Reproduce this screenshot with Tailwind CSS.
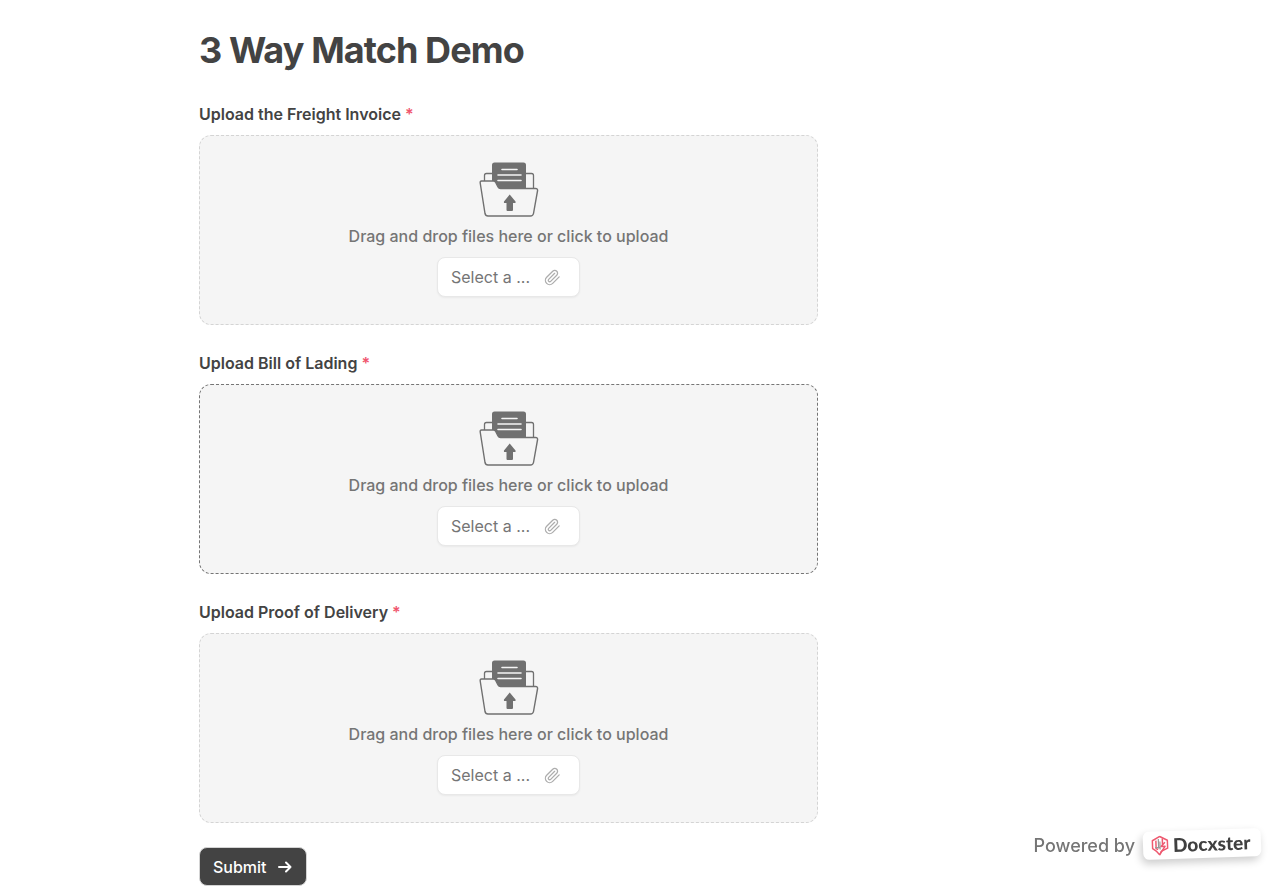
<!DOCTYPE html>
<html lang="en">

<head>
  <meta charset="utf-8">
  <meta name="viewport" content="width=device-width,initial-scale=1">
  <title>3 Way Match Demo</title>
  <script src="https://cdn.jsdelivr.net/npm/@tailwindcss/browser@4"></script>
</head>

<body class="min-h-screen bg-white font-['Inter',sans-serif] text-[#434343]">
  <!-- shared icons -->
  <svg class="hidden" aria-hidden="true">
    <symbol id="folder" viewBox="0 0 60 56">
      <path d="M5.5 19V13.5Q5.5 11.5 7.5 11.5H13M47 11.5H52.5Q54.5 11.5 54.5 13.5V26.5" fill="none" stroke="#707070" stroke-width="1.3" />
      <path d="M13 20V3Q13 .5 15.500 .5H44.500Q47 .5 47 3V27H20L16 20Z" fill="#707070" />
      <path d="M23 7.500H38M19 13H42M19 18.500H42" stroke="#f5f5f5" stroke-width="1.6" stroke-linecap="round" />
      <path d="M2.500 19H14.500Q16 19 16.700 20.500L19 25Q19.800 26.500 21.500 26.500H56.500Q59 26.500 58.500 29L54.500 51.500Q54 54 51.500 54H9Q6.500 54 6 51.500L1.200 21Q1 19 2.500 19Z" fill="#f5f5f5" stroke="#707070" stroke-width="1.4" />
      <path d="M30.700 32.500L36.500 39.500Q37 41 35.500 41H34V48Q34 49 33 49H28.500Q27.500 49 27.500 48V41H26Q24.500 41 25 39.500Z" fill="#707070" />
    </symbol>
    <symbol id="clip" viewBox="0 0 24 24">
      <path d="m21.440 11.050-9.190 9.190a6 6 0 0 1-8.490-8.490l8.570-8.570A4 4 0 1 1 18 8.840l-8.590 8.570a2 2 0 0 1-2.830-2.830l8.490-8.480" fill="none" stroke="#adadad" stroke-width="1.8" stroke-linecap="round" stroke-linejoin="round" />
    </symbol>
  </svg>

  <main class="px-6 pt-7 pb-2 md:pl-[199px]">
    <h1 class="text-4xl leading-[44px] font-bold tracking-tight">3 Way Match Demo</h1>
    <form class="mt-8 flex max-w-[619px] flex-col">
      <div class="mb-7">
        <label for="invoice" class="block text-base leading-5 font-semibold">Upload the Freight Invoice <span class="text-[#f0566e]">*</span></label>
        <div class="relative mt-[11px] flex h-[190px] flex-col items-center rounded-xl border border-dashed border-[#d4d4d4] bg-[#f5f5f5] pt-[26px]">
          <svg class="h-14 w-15"><use href="#folder" /></svg>
          <p class="mt-2 text-base leading-5 font-medium text-[#757575]">Drag and drop files here or click to upload</p>
          <input type="file" id="invoice" class="sr-only">
          <button type="button" class="mt-[11px] flex h-10 w-[143px] items-center gap-3.5 rounded-lg border border-[#e8e8e8] bg-white px-[13px] text-base text-[#757575] shadow-xs">Select a ...<svg class="size-[17px]"><use href="#clip" /></svg></button>
        </div>
      </div>

      <div class="mb-7">
        <label for="lading" class="block text-base leading-5 font-semibold">Upload Bill of Lading <span class="text-[#f0566e]">*</span></label>
        <div class="relative mt-[11px] flex h-[190px] flex-col items-center rounded-xl border border-dashed border-[#757575] bg-[#f5f5f5] pt-[26px]">
          <svg class="h-14 w-15"><use href="#folder" /></svg>
          <p class="mt-2 text-base leading-5 font-medium text-[#757575]">Drag and drop files here or click to upload</p>
          <input type="file" id="lading" class="sr-only">
          <button type="button" class="mt-[11px] flex h-10 w-[143px] items-center gap-3.5 rounded-lg border border-[#e8e8e8] bg-white px-[13px] text-base text-[#757575] shadow-xs">Select a ...<svg class="size-[17px]"><use href="#clip" /></svg></button>
        </div>
      </div>

      <div class="mb-6">
        <label for="delivery" class="block text-base leading-5 font-semibold">Upload Proof of Delivery <span class="text-[#f0566e]">*</span></label>
        <div class="relative mt-[11px] flex h-[190px] flex-col items-center rounded-xl border border-dashed border-[#d4d4d4] bg-[#f5f5f5] pt-[26px]">
          <svg class="h-14 w-15"><use href="#folder" /></svg>
          <p class="mt-2 text-base leading-5 font-medium text-[#757575]">Drag and drop files here or click to upload</p>
          <input type="file" id="delivery" class="sr-only">
          <button type="button" class="mt-[11px] flex h-10 w-[143px] items-center gap-3.5 rounded-lg border border-[#e8e8e8] bg-white px-[13px] text-base text-[#757575] shadow-xs">Select a ...<svg class="size-[17px]"><use href="#clip" /></svg></button>
        </div>
      </div>

      <button type="submit" class="flex h-[39px] w-[108px] items-center gap-2.5 rounded-lg border border-[#d4d4d4] bg-[#434343] px-[13px] text-base font-medium text-white">
        Submit
        <svg class="size-4" viewBox="0 0 16 16" fill="none" stroke="currentColor" stroke-width="2" stroke-linecap="round" stroke-linejoin="round"><path d="M2 8H13.500M9 3.500L13.500 8L9 12.500" /></svg>
      </button>
    </form>
  </main>

  <!-- badge -->
  <div class="fixed right-[19px] bottom-9 flex items-start gap-2 text-lg leading-7 font-medium text-[#757575]">
    Powered by
    <a href="#" class="-mt-0.5 flex h-7 w-[118px] -rotate-2 items-center gap-1 rounded-md bg-white pl-2 font-['Lato',sans-serif] text-[19px] font-black text-[#404040] shadow-[-2px_4px_8px_rgba(0,0,0,0.2)]">
      <svg class="h-5 w-[18px] shrink-0" viewBox="0 0 18 20" fill="none" stroke="#ee5a70" stroke-width="1.5" stroke-linejoin="round">
        <path d="M9 1L1.500 5V13L5 15.500L8.500 19.500L10 16L16.500 13V5Z" />
        <path d="M5 5V13L7 14M11.500 3V9M14 7L10 11H14L9 18" />
        <path d="M7.500 3.500V13M9 6V14M4 12H9" stroke="#999999" stroke-width="1.2" />
      </svg>
      Docxster
    </a>
  </div>
</body>

</html>
